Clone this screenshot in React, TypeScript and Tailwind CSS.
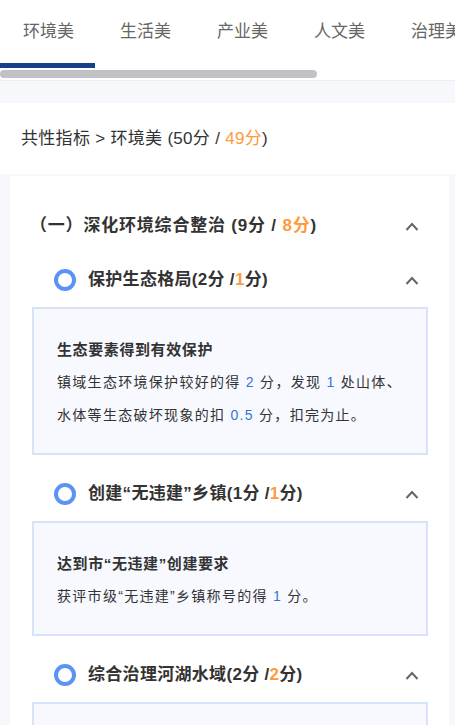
import React from 'react';

// 指标条目
interface Item {
  name: string;
  full: string;
  got: string;
  title: React.ReactNode;
  body: React.ReactNode;
}

const Num = ({ children }: { children: React.ReactNode }) => (
  <span className="text-[#3575d3]">{children}</span>
);

const items: Item[] = [
  {
    name: '保护生态格局',
    full: '2',
    got: '1',
    title: '生态要素得到有效保护',
    body: (
      <>
        镇域生态环境保护较好的得 <Num>2</Num> 分，发现 <Num>1</Num> 处山体、水体等生态破坏现象的扣 <Num>0.5</Num> 分，扣完为止。
      </>
    ),
  },
  {
    name: '创建“无违建”乡镇',
    full: '1',
    got: '1',
    title: '达到市“无违建”创建要求',
    body: (
      <>
        获评市级“无违建”乡镇称号的得 <Num>1</Num> 分。
      </>
    ),
  },
  {
    name: '综合治理河湖水域',
    full: '2',
    got: '2',
    title: '河湖水域整治到位',
    body: (
      <>
        河湖水域无黑臭水体、无违规排污的得 <Num>2</Num> 分。
      </>
    ),
  },
];

const tabs = ['环境美', '生活美', '产业美', '人文美', '治理美'];

const Chevron = () => (
  <svg width="14" height="9" viewBox="0 0 14 9" className="shrink-0">
    <polyline points="1.5,8 7,2 12.5,8" fill="none" stroke="#666" strokeWidth="2" />
  </svg>
);

const App = () => {
  return (
    <div
      className="min-h-screen bg-[#f7f8fc] text-[#333]"
      style={{ fontFamily: '"Liberation Sans", "Noto Sans CJK SC", sans-serif' }}
    >
      {/* 顶部标签 */}
      <div className="bg-white border-b border-[#eeeeee] overflow-hidden">
        <div className="flex h-[63px] whitespace-nowrap">
          {tabs.map((t) => (
            <div key={t} className="w-[97px] shrink-0 flex items-center justify-center text-[17px] text-[#666]">
              {t}
            </div>
          ))}
        </div>
        <div className="w-[95px] h-[5px] bg-[#163f8a]" />
        <div className="mt-[2px] mb-[2px] w-[317px] h-[8px] rounded-full bg-[#c1c1c6]" />
      </div>

      <div className="h-[22px]" />

      {/* 面包屑 */}
      <div className="bg-white h-[71px] flex items-center pl-[21px] text-[17px] tracking-[0.3px] whitespace-pre">
        共性指标 &gt; 环境美 (50分 /{' '}<span className="text-[#ff9a3d]">49分</span>)
      </div>

      {/* 内容卡片 */}
      <div className="mt-[2px] ml-[10px] mr-[6px] bg-white pt-[35px] pb-8">
        <div className="h-[30px] flex items-center justify-between pl-[20px] pr-[30px]">
          <div className="text-[17px] font-bold tracking-[0.8px]">
            （一）深化环境综合整治 (9分 / <span className="text-[#ff9a3d]">8分</span>)
          </div>
          <Chevron />
        </div>

        <div className="mt-[9px]">
          {items.map((it) => (
            <div key={it.name} className="mt-[24px]">
              <div className="h-[30px] flex items-center justify-between pl-[44px] pr-[30px]">
                <div className="flex items-center gap-[12px]">
                  <span className="w-[22px] h-[22px] rounded-full border-[4px] border-[#5b93f5] shrink-0" />
                  <span className="text-[17px] font-bold tracking-[0.3px]">
                    {it.name}({it.full}分 /<span className="text-[#ff9a3d]">{it.got}</span>分)
                  </span>
                </div>
                <Chevron />
              </div>
              <div className="mt-[12px] mr-[21px] ml-[22px] border-2 border-[#d5e4fa] bg-[#f7f9ff] pl-[23px] pr-[24px] pt-[30px] pb-[21px]">
                <div className="text-[15px] font-bold leading-[22px] tracking-[0.6px]">{it.title}</div>
                <div className="mt-[5px] text-[14px] leading-[33px] tracking-[1.3px]">{it.body}</div>
              </div>
            </div>
          ))}
        </div>
      </div>
    </div>
  );
};

export default App;
